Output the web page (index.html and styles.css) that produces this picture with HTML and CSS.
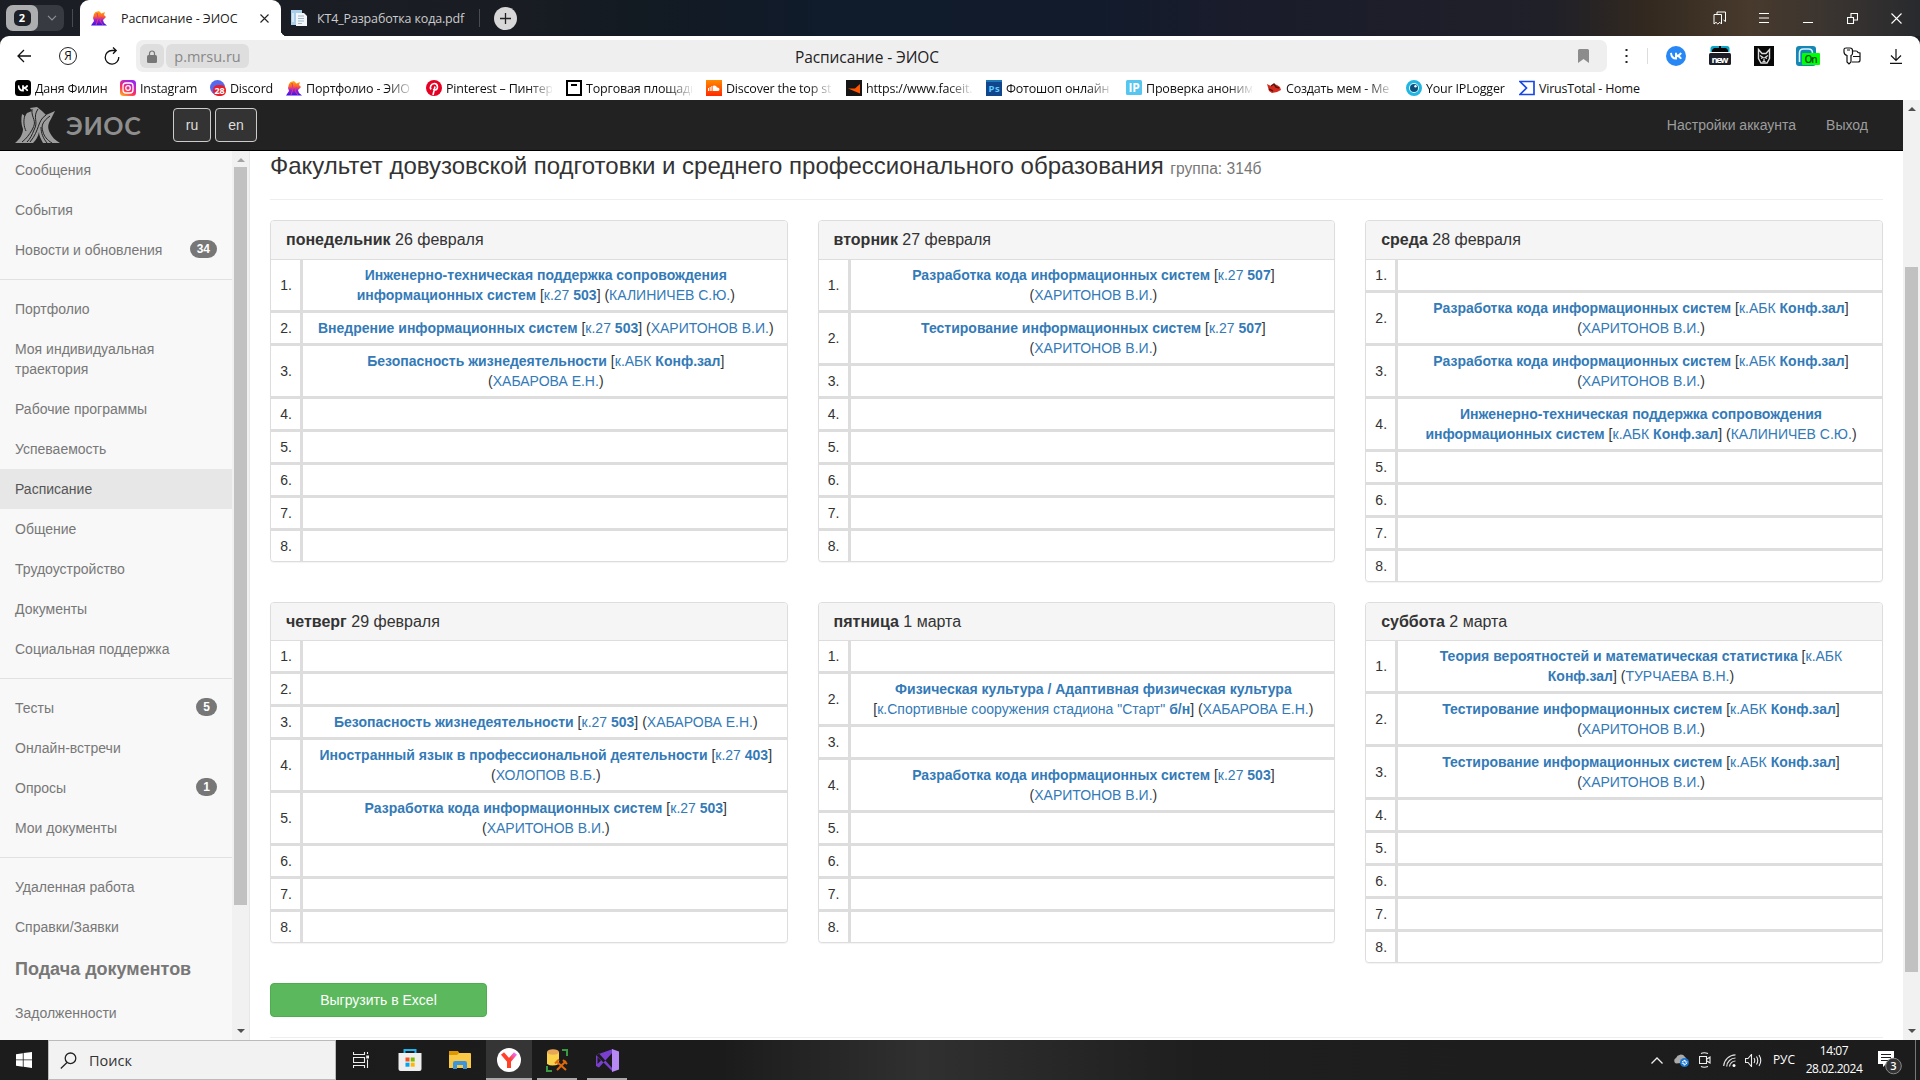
FILE: index.html
```html
<!DOCTYPE html>
<html lang="ru">
<head>
<meta charset="utf-8">
<title>Расписание - ЭИОС</title>
<link rel="stylesheet" href="styles.css">
</head>
<body>
<svg class="defs" width="0" height="0">
  <defs>
    <linearGradient id="flame" x1="0" y1="0" x2="0" y2="1"><stop offset="0" stop-color="#ffb200"/><stop offset=".4" stop-color="#ff5a2f"/><stop offset=".62" stop-color="#a01fd0"/><stop offset="1" stop-color="#3a12e8"/></linearGradient>
    <linearGradient id="insta" x1="0" y1="1" x2=".6" y2="0"><stop offset="0" stop-color="#ffc21a"/><stop offset=".45" stop-color="#ff2f5c"/><stop offset="1" stop-color="#a022f0"/></linearGradient>
    <linearGradient id="cloudy" x1="0" y1="0" x2="0" y2="1"><stop offset="0" stop-color="#ff8a00"/><stop offset="1" stop-color="#ff2a00"/></linearGradient>
    <linearGradient id="ya" x1="0" y1="1" x2="1" y2="0"><stop offset="0" stop-color="#ff4418"/><stop offset=".6" stop-color="#ff4030"/><stop offset="1" stop-color="#f06aff"/></linearGradient>
    <symbol id="eios" viewBox="0 0 16 15"><path fill="url(#flame)" d="M4.500 1L8 0l2.500 2.500L14 1l-1 3 2 2-3 3 1 3 3 2.500H0L3 10 2 7l1-4z"/><path d="M6 2l1 6-2 6M10.500 6L9 10l3 4" stroke="#d63a8c" fill="none"/></symbol>
    <symbol id="vkmark" viewBox="0 0 12 8"><path d="M1 .8c.3 3.600 2 5.700 5 5.700V.8M11 .8C10.300 2.500 9 3.600 6.400 3.700 9 4 10.300 5.200 11.200 6.800" fill="none" stroke="#fff" stroke-width="1.900"/></symbol>
  </defs>
</svg>
<div class="screen">
  <header class="tabstrip">
    <div class="tabgroup"><span class="tabcount"><b>2</b></span>
      <svg class="groupchev" width="10" height="6" viewBox="0 0 10 6"><path d="M1 .8l4 4 4-4" fill="none" stroke="#8d9096" stroke-width="1.200"/></svg></div>
    <i class="vline group-line"></i>
    <div class="tab active"><svg width="16" height="15"><use href="#eios"/></svg><span class="ui tabtext">Расписание - ЭИОС</span>
      <svg class="tabclose" width="9" height="9" viewBox="0 0 9 9"><path d="M.5.5l8 8m0-8l-8 8" stroke="#222" stroke-width="1.100"/></svg></div>
    <div class="tab"><svg width="16" height="16" viewBox="0 0 16 16"><path d="M0 0h11v15H0z" fill="#a9cfe8"/><path d="M5 3h8l3 3v10H5z" fill="#f3f6f8"/><path d="M7 6h6M7 8.500h6M7 11h6M7 13.500h4" stroke="#9eb6c5"/><path d="M2 3v9" stroke="#fff"/></svg><span class="ui tabtext light">КТ4_Разработка кода.pdf</span></div>
    <i class="vline"></i>
    <div class="newtab"><svg width="13" height="13" viewBox="0 0 13 13"><path d="M6.500 1v11M1 6.500h11" stroke="#222" stroke-width="1.300"/></svg></div>
    <div class="slots">
      <span><svg width="14" height="14" viewBox="0 0 14 14"><path d="M1 3.500h7.500V13L6.800 11.300 4.800 13 3 11.300 1 13z M4 3.500V1h8.500v9.500l-2-1.500" fill="none" stroke="#fff" stroke-linejoin="round"/></svg></span>
      <span><svg width="10" height="10" viewBox="0 0 10 10"><path d="M0 .5h10M0 5h10M0 9.500h10" stroke="#fff"/></svg></span>
      <span><svg width="10" height="10" viewBox="0 0 10 10"><path d="M0 9.500h10" stroke="#fff"/></svg></span>
      <span><svg width="11" height="11" viewBox="0 0 11 11"><path d="M.5 4.500h6v6h-6zM4 4V.5h6.500V7H7" fill="none" stroke="#fff" stroke-width="1.100"/></svg></span>
      <span><svg width="11" height="11" viewBox="0 0 11 11"><path d="M.5.5l10 10m0-10l-10 10" stroke="#fff" stroke-width="1.100"/></svg></span>
    </div>
  </header>

  <div class="toolbar">
    <div class="nav">
      <span><svg width="14" height="14" viewBox="0 0 14 14"><path d="M14 7H1M7 1L1 7l6 6" fill="none" stroke="#111" stroke-width="1.300"/></svg></span>
      <span class="yaicon ui">Я</span>
      <span><svg width="16" height="18" viewBox="0 0 16 18"><path d="M14.800 10A6.800 6.800 0 1 1 8 3.500h4M9 .5l3.200 3L9 6.700" fill="none" stroke="#111" stroke-width="1.300"/></svg></span>
    </div>
    <div class="omni">
      <span class="chip lock"><svg width="10" height="13" viewBox="0 0 10 13"><path d="M2.500 6V3.500a2.500 2.500 0 0 1 5 0V6" fill="none" stroke="#777" stroke-width="1.200"/><rect y="5" width="10" height="8" rx="1.500" fill="#777"/></svg></span>
      <span class="chip host ui">p.mrsu.ru</span>
      <span class="pagetitle ui">Расписание - ЭИОС</span>
      <svg class="mark" width="11" height="14" viewBox="0 0 11 14"><path d="M0 1.500Q0 0 1.500 0h8Q11 0 11 1.500V14l-5.500-4L0 14z" fill="#8c8c8c"/></svg>
    </div>
    <svg class="dots" width="3" height="14" viewBox="0 0 3 14"><path d="M.5 0h2v2h-2zM.5 6h2v2h-2zM.5 12h2v2h-2z" fill="#222"/></svg>
    <i class="vline tool-line"></i>
    <div class="slots">
      <span><svg width="20" height="20" viewBox="0 0 20 20"><circle cx="10" cy="10" r="10" fill="#2787f5"/><svg x="4" y="6" width="12" height="8"><use href="#vkmark"/></svg></svg></span>
      <span><svg width="22" height="20" viewBox="0 0 22 20"><path d="M1.500 6V2.500Q1.500 0 4 0h14q2.500 0 2.500 2.500V6z" fill="#0aa5c8"/><path d="M3 6V4l2-2h5V0h2v2h5l2 2v2z" fill="#050505"/><rect y="7" width="22" height="12" rx="1.500" fill="#1c1f26"/><text class="svgbold" x="11" y="16.500" font-size="9.500" textLength="17" text-anchor="middle" fill="#fff">new</text></svg></span>
      <span><svg width="20" height="20" viewBox="0 0 20 20"><path d="M0 0h20v20H0z" fill="#080808"/><path d="M4.500 3.500L8 7.500h4l3.500-4v9L13 17H7l-2.500-4.500z" fill="none" stroke="#ddd" stroke-width="1.400"/><path d="M6 9.500l3 2-2 1M14 9.500l-3 2 2 1M10 12.500V15M8.500 15.500h3" stroke="#ddd" fill="none" stroke-width="1.200"/></svg></span>
      <span><svg width="24" height="20" viewBox="0 0 24 20"><rect width="20" height="20" rx="3" fill="#1687b5"/><path d="M3.500 16V7q0-4 4-4h5q4 0 4 4" fill="none" stroke="#d8f3ff" stroke-width="1.600"/><rect x="6" y="7" width="18" height="12" rx="1" fill="#0f0"/><text class="svgtext" x="15" y="16.500" font-size="10" font-weight="600" textLength="13" text-anchor="middle" fill="#042">On</text></svg></span>
      <span><svg width="18" height="18" viewBox="0 0 18 18"><path d="M1 2.500Q1 1 3 1h4q2.500 0 2.500 2.500v3Q9.500 8 8 8.500V15l-2 2-2-2V8.500Q1 7.500 1 5zM4 3h3M10 4h3q1.500 0 2 1.500l2 .5v7q0 2-2 2H9M10 9.500h7" fill="none" stroke="#111" stroke-width="1.200"/></svg></span>
      <span><svg width="12" height="15" viewBox="0 0 12 15"><path d="M6 0v11M1 6.500l5 5 5-5M0 14.400h12" fill="none" stroke="#111" stroke-width="1.200"/></svg></span>
    </div>
  </div>

  <nav class="bookmarks ui">
    <a class="bm w1"><svg width="16" height="16" viewBox="0 0 16 16"><rect width="16" height="16" rx="3.500"/><svg x="2.500" y="4.500" width="11" height="7.500"><use href="#vkmark"/></svg></svg><span>Даня Филин</span></a>
    <a class="bm w2"><svg width="16" height="16" viewBox="0 0 16 16"><rect width="16" height="16" rx="3.500" fill="url(#insta)"/><rect x="3" y="3" width="10" height="10" rx="3" fill="none" stroke="#fff" stroke-width="1.300"/><circle cx="8" cy="8" r="2.300" fill="none" stroke="#fff" stroke-width="1.300"/></svg><span>Instagram</span></a>
    <a class="bm w3"><svg width="16" height="16" viewBox="0 0 16 16"><circle cx="7.500" cy="7.500" r="7.500" fill="#5468f0"/><rect x="3" y="5" width="13" height="11" rx="5" fill="#e5202c"/><text class="svgbold" x="9.500" y="14" font-size="9" text-anchor="middle" textLength="10" fill="#fff">28</text></svg><span>Discord</span></a>
    <a class="bm"><svg width="16" height="15"><use href="#eios"/></svg><span>Портфолио - ЭИО</span></a>
    <a class="bm"><svg width="16" height="16" viewBox="0 0 16 16"><circle cx="8" cy="8" r="8" fill="#e60023"/><path d="M7 15l2-8.500M5 9.500C3.500 7 5 3.500 8.300 3.500c4 0 4.200 6.500.7 6.500-1 0-1.500-.6-1.500-1" fill="none" stroke="#fff" stroke-width="1.600"/></svg><span>Pinterest – Пинтер</span></a>
    <a class="bm"><svg width="16" height="16" viewBox="0 0 16 16"><path d="M1 1h14v14H1z" fill="#fff" stroke="#000" stroke-width="2"/><path d="M5 5h6" stroke="#000" stroke-width="2"/></svg><span>Торговая площадк</span></a>
    <a class="bm"><svg width="16" height="16" viewBox="0 0 16 16"><path d="M0 0h16v16H0z" fill="url(#cloudy)"/><path d="M2.500 8v3M4.200 7v4M5.900 6v5" stroke="#fff"/><path d="M7 11V5.800q3-1.300 4 1.700 2.500-.2 2.500 1.700T12 11z" fill="#fff"/></svg><span>Discover the top st</span></a>
    <a class="bm"><svg width="16" height="16" viewBox="0 0 16 16"><path d="M0 0h16v16H0z" fill="#161616"/><path d="M2 8.500h7L14 4v9.500z" fill="#ff5500"/></svg><span>https://www.faceit.</span></a>
    <a class="bm"><svg width="16" height="16" viewBox="0 0 16 16"><path d="M0 0h16v16H0z" fill="#12468c"/><path d="M0 0h16v2H0z" fill="#1e78b8"/><text class="svgbold" x="8" y="12" font-size="9.500" text-anchor="middle" textLength="11" fill="#5cc8ff">Ps</text></svg><span>Фотошоп онлайн</span></a>
    <a class="bm"><svg width="16" height="16" viewBox="0 0 16 16"><rect width="16" height="15" rx="1.500" fill="#56c5f0"/><text class="svgbold" x="8" y="12" font-size="12" text-anchor="middle" textLength="11" fill="#fff">IP</text></svg><span>Проверка аноним</span></a>
    <a class="bm"><svg width="16" height="16" viewBox="0 0 16 16"><path d="M1 4l4 2 3-2 3 1 3 2 1 3-4 2-5 1-3-2z" fill="#d42b1e"/><path d="M5 6l3-2 2 3 3 1M3 9l4 2" stroke="#57180f" fill="none" stroke-width="1.500"/></svg><span>Создать мем - Ме</span></a>
    <a class="bm w12"><svg width="16" height="16" viewBox="0 0 16 16"><circle cx="8" cy="8" r="6.500" fill="#d8f7ff" stroke="#21b5e2" stroke-width="3"/><circle cx="8" cy="8" r="4" fill="#0b4f7d"/><circle cx="9.500" cy="6.300" r="1.200" fill="#fff"/></svg><span>Your IPLogger</span></a>
    <a class="bm"><svg width="16" height="16" viewBox="0 0 16 16"><path d="M1 1.500h14v13H1L7.500 8z" fill="#fff" stroke="#1848e8" stroke-width="1.700"/></svg><span>VirusTotal - Home</span></a>
  </nav>

  <div class="viewport">
    <div class="page">
      <header class="site">
        <svg class="logo" width="45" height="36" viewBox="0 0 45 36"><path d="M15 1l7-1 5 4 4 4 9-4-4 8c-4 6-3 10-1 14 2 4 5 7 10 10H0c5-4 8-9 8-14-2-5-2-10-1-15l3 2 2-3 5-2z" fill="#9d9d9d"/><path d="M17 2c-1 10 6 11 0 21-3 5-6 9-10 12M23 2c-6 9 1 12-4 21-2 5-4 9-7 12M31 8c-9 6-6 15-16 27M35 9c-8 6-9 10-7 16 1 4 4 8 9 11M10 8c-2 6-1 12 1 16M26 20c0 6 2 11 6 16" fill="none" stroke="#222" stroke-width="1"/><path d="M24 25c-1 5-3 8-6 11h10c-2-4-4-7-4-11z" fill="#222"/></svg>
        <b class="brand">ЭИОС</b>
        <span class="lang ru">ru</span><span class="lang en">en</span>
        <span class="account">Настройки аккаунта</span><span class="exit">Выход</span>
      </header>
      <div class="body">
        <aside class="sidebar">
          <ul class="menu">
            <li>Сообщения</li><li>События</li><li>Новости и обновления<b class="badge">34</b></li>
            <li class="sep"></li>
            <li>Портфолио</li><li>Моя индивидуальная<br>траектория</li><li>Рабочие программы</li><li>Успеваемость</li><li class="on">Расписание</li><li>Общение</li><li>Трудоустройство</li><li>Документы</li><li>Социальная поддержка</li>
            <li class="sep"></li>
            <li>Тесты<b class="badge">5</b></li><li>Онлайн-встречи</li><li>Опросы<b class="badge">1</b></li><li>Мои документы</li>
            <li class="sep"></li>
            <li>Удаленная работа</li><li>Справки/Заявки</li><li class="title">Подача документов</li><li>Задолженности</li>
          </ul>
          <div class="scroll side"><i class="up pale"></i><i class="thumb"></i><i class="down"></i></div>
        </aside>
        <main class="content">
          <h3>Факультет довузовской подготовки и среднего профессионального образования <small>группа: 314б</small></h3>
          <section class="days">
            <article class="day"><h4><b>понедельник</b> 26 февраля</h4><div class="rows">
              <i>1.</i><p><a><b>Инженерно-техническая поддержка сопровождения<br>информационных систем</b></a> [<a>к.27 <b>503</b></a>] (<a>КАЛИНИЧЕВ С.Ю.</a>)</p>
              <i>2.</i><p><a><b>Внедрение информационных систем</b></a> [<a>к.27 <b>503</b></a>] (<a>ХАРИТОНОВ В.И.</a>)</p>
              <i>3.</i><p><a><b>Безопасность жизнедеятельности</b></a> [<a>к.АБК <b>Конф.зал</b></a>]<br>(<a>ХАБАРОВА Е.Н.</a>)</p>
              <i>4.</i><p></p><i>5.</i><p></p><i>6.</i><p></p><i>7.</i><p></p><i>8.</i><p></p></div></article>
            <article class="day"><h4><b>вторник</b> 27 февраля</h4><div class="rows">
              <i>1.</i><p><a><b>Разработка кода информационных систем</b></a> [<a>к.27 <b>507</b></a>]<br>(<a>ХАРИТОНОВ В.И.</a>)</p>
              <i>2.</i><p><a><b>Тестирование информационных систем</b></a> [<a>к.27 <b>507</b></a>]<br>(<a>ХАРИТОНОВ В.И.</a>)</p>
              <i>3.</i><p></p><i>4.</i><p></p><i>5.</i><p></p><i>6.</i><p></p><i>7.</i><p></p><i>8.</i><p></p></div></article>
            <article class="day"><h4><b>среда</b> 28 февраля</h4><div class="rows">
              <i>1.</i><p></p>
              <i>2.</i><p><a><b>Разработка кода информационных систем</b></a> [<a>к.АБК <b>Конф.зал</b></a>]<br>(<a>ХАРИТОНОВ В.И.</a>)</p>
              <i>3.</i><p><a><b>Разработка кода информационных систем</b></a> [<a>к.АБК <b>Конф.зал</b></a>]<br>(<a>ХАРИТОНОВ В.И.</a>)</p>
              <i>4.</i><p><a><b>Инженерно-техническая поддержка сопровождения<br>информационных систем</b></a> [<a>к.АБК <b>Конф.зал</b></a>] (<a>КАЛИНИЧЕВ С.Ю.</a>)</p>
              <i>5.</i><p></p><i>6.</i><p></p><i>7.</i><p></p><i>8.</i><p></p></div></article>
            <article class="day"><h4><b>четверг</b> 29 февраля</h4><div class="rows">
              <i>1.</i><p></p><i>2.</i><p></p>
              <i>3.</i><p><a><b>Безопасность жизнедеятельности</b></a> [<a>к.27 <b>503</b></a>] (<a>ХАБАРОВА Е.Н.</a>)</p>
              <i>4.</i><p><a><b>Иностранный язык в профессиональной деятельности</b></a> [<a>к.27 <b>403</b></a>]<br>(<a>ХОЛОПОВ В.Б.</a>)</p>
              <i>5.</i><p><a><b>Разработка кода информационных систем</b></a> [<a>к.27 <b>503</b></a>]<br>(<a>ХАРИТОНОВ В.И.</a>)</p>
              <i>6.</i><p></p><i>7.</i><p></p><i>8.</i><p></p></div></article>
            <article class="day"><h4><b>пятница</b> 1 марта</h4><div class="rows">
              <i>1.</i><p></p>
              <i>2.</i><p><a><b>Физическая культура / Адаптивная физическая культура</b></a><br>[<a>к.Спортивные сооружения стадиона "Старт" <b>б/н</b></a>] (<a>ХАБАРОВА Е.Н.</a>)</p>
              <i>3.</i><p></p>
              <i>4.</i><p><a><b>Разработка кода информационных систем</b></a> [<a>к.27 <b>503</b></a>]<br>(<a>ХАРИТОНОВ В.И.</a>)</p>
              <i>5.</i><p></p><i>6.</i><p></p><i>7.</i><p></p><i>8.</i><p></p></div></article>
            <article class="day"><h4><b>суббота</b> 2 марта</h4><div class="rows">
              <i>1.</i><p><a><b>Теория вероятностей и математическая статистика</b></a> [<a>к.АБК<br><b>Конф.зал</b></a>] (<a>ТУРЧАЕВА В.Н.</a>)</p>
              <i>2.</i><p><a><b>Тестирование информационных систем</b></a> [<a>к.АБК <b>Конф.зал</b></a>]<br>(<a>ХАРИТОНОВ В.И.</a>)</p>
              <i>3.</i><p><a><b>Тестирование информационных систем</b></a> [<a>к.АБК <b>Конф.зал</b></a>]<br>(<a>ХАРИТОНОВ В.И.</a>)</p>
              <i>4.</i><p></p><i>5.</i><p></p><i>6.</i><p></p><i>7.</i><p></p><i>8.</i><p></p></div></article>
          </section>
          <a class="excel">Выгрузить в Excel</a>
          <hr>
        </main>
      </div>
    </div>
    <div class="scroll main"><i class="up"></i><i class="thumb"></i><i class="down"></i></div>
  </div>

  <footer class="taskbar">
    <div class="start"><svg width="16" height="16" viewBox="0 0 16 16"><path d="M0 2.200l6.800-1v6.300H0zM7.600 1.100L16 0v7.500H7.600zM0 8.300h6.800v6.400L0 13.800zM7.600 8.300H16V16l-8.400-1.200z" fill="#fff"/></svg></div>
    <div class="search ui"><svg width="17" height="17" viewBox="0 0 17 17"><circle cx="10.500" cy="6.300" r="5.300" fill="none" stroke="#222" stroke-width="1.300"/><path d="M7 10.500L.8 16.500" stroke="#222" stroke-width="1.300"/></svg><span>Поиск</span></div>
    <div class="apps">
      <span class="app"><svg width="16" height="16" viewBox="0 0 16 16"><path d="M.5 0v2.500h11V0M.5 5.500h11v5H.5zM.5 16v-2.500h11V16M14.500 0v2M14.500 7.500V16" fill="none" stroke="#eee" stroke-width="1.100"/><path d="M13.200 3.500H16v3h-2.800z" fill="#eee"/></svg></span>
      <span class="app"><svg width="24" height="24" viewBox="0 0 24 24"><path d="M6.500 7V2h11v5" fill="none" stroke="#23b4f2" stroke-width="2"/><path d="M.5 5h23v16q0 2-2 2h-19q-2 0-2-2z" fill="#eee"/><path d="M7.500 9.500h4v4h-4z" fill="#f25022"/><path d="M12.700 9.500h4v4h-4z" fill="#7fba00"/><path d="M7.500 14.700h4v4h-4z" fill="#00a4ef"/><path d="M12.700 14.700h4v4h-4z" fill="#ffb900"/></svg></span>
      <span class="app"><svg width="22" height="18" viewBox="0 0 22 18"><path d="M0 1q0-1 1-1h7l2 2h11q1 0 1 1v14H0z" fill="#f9c846"/><path d="M0 0h9l1 2-2 2H0z" fill="#dd9700"/><path d="M4 18v-6q0-2 2-2h10q2 0 2 2v6h-4v-4H8v4z" fill="#3b95dc"/></svg></span>
      <span class="app current"><svg width="24" height="24" viewBox="0 0 24 24"><circle cx="12" cy="12" r="12" fill="#fff"/><path d="M5.500 5.500L12 13v7M12 13l6.500-7.500" fill="none" stroke="url(#ya)" stroke-width="4"/></svg></span>
      <span class="app open"><svg width="22" height="23" viewBox="0 0 22 23"><path d="M1 3v12q5 3 12 0V3z" fill="#fbd34a"/><ellipse cx="7" cy="3" rx="6" ry="2.800" fill="#e8a659"/><path d="M16 1h5v6M1 17v5h5" fill="none" stroke="#3a9a44" stroke-width="2"/><path d="M10 12l10 9M20 12l-9 9M9 14.500l4-4M17 11l4 4" stroke="#e0690c" stroke-width="2"/></svg></span>
      <span class="app open"><svg width="24" height="23" viewBox="0 0 24 23"><path d="M1 6l3-1.500L18 20v3zM1 6v11l3 1.500L18 3V0z" fill="#7b3fd0"/><path d="M2.500 8v7L6 11.500z" fill="#1c1c1c"/><path d="M17 0l7 2.500v18L17 23z" fill="#b689f3"/><path d="M17 7v9l-5-4.500z" fill="#1c1c1c"/></svg></span>
    </div>
    <div class="tray ui">
      <span class="t1"><svg width="12" height="7" viewBox="0 0 12 7"><path d="M.5 6.500L6 1l5.500 5.500" fill="none" stroke="#eee" stroke-width="1.300"/></svg></span>
      <span class="t1"><svg width="16" height="13" viewBox="0 0 16 13"><path d="M3 9.500a3 3 0 0 1 0-5.500A5 5 0 0 1 12 3q2 1 1.500 5.500z" fill="#aaa"/><circle cx="11.500" cy="8.500" r="4.500" fill="#1976d2"/><path d="M9 8l3-2v2h2.500M14 9.200l-3 2v-2H8.700" stroke="#fff" fill="none"/></svg></span>
      <span class="t1"><svg width="12" height="16" viewBox="0 0 12 16"><path d="M.5 4.500h7v7h-7zM8 7l3-2v6L8 9M2 1.500Q5 0 9 1.500M2 14.500Q5 16 9 14.500" fill="none" stroke="#eee" stroke-width="1.100"/></svg></span>
      <span class="t1"><svg width="13" height="13" viewBox="0 0 13 13"><path d="M.7 12A12 12 0 0 1 12.500.8M3.700 12.500A9 9 0 0 1 12.500 4M6.500 12.500a6 6 0 0 1 6-5.500" fill="none" stroke="#ddd" stroke-width="1.200"/><circle cx="11" cy="11.500" r="1.500" fill="#fff"/></svg></span>
      <span class="t1"><svg width="17" height="13" viewBox="0 0 17 13"><path d="M.5 4.500H3l3.500-4v12l-3.500-4H.5zM9 4q1.500 2.500 0 5M11.500 2.500q2.500 4 0 8M14 1q3.500 5.500 0 11" fill="none" stroke="#eee" stroke-width="1.100"/></svg></span>
      <span class="langcode">РУС</span>
      <span class="clock">14:07<br>28.02.2024</span>
      <span class="note"><svg width="26" height="26" viewBox="0 0 26 26"><path d="M1 2h16v13H9l-3 3v-3H1z" fill="#fff"/><path d="M4 5.500h10M4 8.500h10M4 11.500h7" stroke="#1c1c1c"/><circle cx="16.500" cy="17" r="7.800" fill="#333" stroke="#888"/><text class="svgtext" x="16.500" y="21" font-size="11" font-weight="600" text-anchor="middle" fill="#fff">3</text></svg></span>
      <i class="peek"></i>
    </div>
  </footer>
</div>
</body>
</html>
```

FILE: styles.css
```css
* { box-sizing: border-box; }
body { margin: 0; overflow: hidden; font: 14px/20px "Liberation Sans", Arial, sans-serif; color: #333; background: #15181d; }
.defs { position: absolute; }
svg { display: block; flex: none; }
.screen { width: 1920px; height: 1080px; display: flex; flex-direction: column; background: #1b1e25; }
.ui, .svgtext, .svgbold { font-family: "Open Sans", "Noto Sans", sans-serif; }
.svgbold { font-weight: 700; }
.vline { width: 1px; height: 18px; background: #484c52; flex: none; }

/* tab strip */
.tabstrip { height: 36px; flex: none; display: flex; align-items: center; padding-left: 6px;
  background: linear-gradient(90deg, #1b1e25 0, #191c23 520px, #121a22 640px, #101b2b 820px, #111b2c 1080px, #1b1c2b 1260px, #1f2028 1550px, #33291f 1650px, #483a2d 1750px, #3a3430 1830px, #282a2e 1920px); }
.tabgroup { width: 58px; height: 26px; border-radius: 7px; background: #373a40; display: flex; align-items: center; }
.tabcount { width: 32px; height: 26px; border-radius: 7px; background: #adaeaf; display: flex; align-items: center; justify-content: center; }
.tabcount b { width: 17px; height: 16px; border-radius: 5px; background: #1d2026; color: #fff; font: 700 11px/16px "Open Sans", sans-serif; text-align: center; }
.groupchev { margin-left: 9px; }
.group-line { margin: 0 7px 0 8px; }
.tab { height: 36px; display: flex; align-items: center; padding-left: 10px; width: 198px; position: relative; }
.tab.active { width: 201px; padding-left: 11px; background: #fff; border-radius: 9px 9px 0 0; }
.tab.active::after { content: ""; position: absolute; left: 100%; bottom: 0; width: 6px; height: 6px; background: radial-gradient(circle at 100% 0, transparent 6px, #fff 6.500px); }
.tabtext { font-size: 12.500px; margin-left: 14px; width: 118px; color: #222; white-space: nowrap; letter-spacing: -.05px; padding-top: 1px; }
.tabtext.light { color: #ccc; margin-left: 10px; width: 150px; letter-spacing: -.15px; }
.tabclose { margin-left: 21px; }
.newtab { width: 23px; height: 23px; border-radius: 50%; background: #d8d8d8; margin-left: 14px; display: flex; align-items: center; justify-content: center; }
.slots { display: flex; margin-left: auto; padding-right: 2px; }
.slots span { width: 44px; display: flex; justify-content: center; align-items: center; }

/* address bar */
.toolbar { height: 40px; flex: none; display: flex; align-items: center; background: #fff; border-radius: 9px 9px 0 0; }
.nav { width: 136px; display: flex; padding-left: 2px; }
.nav span { width: 44px; display: flex; justify-content: center; align-items: center; }
.nav .yaicon { width: 18px; height: 18px; margin: 0 13px; border: 1.300px solid #222; border-radius: 50%; font-size: 12px; line-height: 16px; color: #111; }
.omni { width: 1471px; height: 32px; border-radius: 7px; background: #efefef; display: flex; align-items: center; padding-left: 4px; }
.chip { height: 24px; border-radius: 6px; background: #dedede; display: flex; align-items: center; justify-content: center; }
.lock { width: 24px; }
.host { width: 83px; margin-left: 2px; font-size: 14.500px; color: #888; padding-top: 1px; }
.pagetitle { margin-left: 546px; width: 146px; font-size: 15.500px; color: #222; white-space: nowrap; letter-spacing: -.1px; padding-top: 1px; }
.mark { margin-left: 637px; }
.dots { margin-left: 18px; }
.tool-line { height: 16px; background: #ddd; margin-left: 19px; }

/* bookmarks */
.bookmarks { height: 24px; flex: none; display: flex; padding-left: 15px; background: #fff; font-size: 12.500px; letter-spacing: -.2px; color: #111; }
.bm { width: 140px; height: 24px; display: flex; align-items: center; flex: none; }
.bm span { max-width: 106px; margin-left: 4px; overflow: hidden; white-space: nowrap; line-height: 20px; padding-top: 1px; -webkit-mask: linear-gradient(90deg, #000 82px, transparent 108px); mask: linear-gradient(90deg, #000 82px, transparent 108px); }
.w1 { width: 105px; } .w2 { width: 90px; } .w3 { width: 76px; } .w12 { width: 113px; }
.bm:last-child span { mask: none; -webkit-mask: none; }

/* web page */
.viewport { height: 940px; flex: none; display: flex; overflow: hidden; background: #fff; }
.page { width: 1903px; }
.site { height: 51px; background: #222; border-bottom: 1px solid #000; display: flex; align-items: center; padding-left: 15px; color: #9d9d9d; }
.logo { margin-top: -1px; }
.brand { font: 700 25px/30px Lato, sans-serif; width: 77px; margin-left: 6px; margin-right: 30px; color: #8e8e8e; letter-spacing: .7px; }
.lang { height: 34px; border: 1px solid #ccc; border-radius: 4px; background: #333; color: #ddd; line-height: 32px; text-align: center; }
.ru { width: 38px; } .en { width: 42px; margin-left: 4px; }
.account { margin-left: auto; } .exit { margin: 0 35px 0 30px; }
.body { height: 889px; display: flex; overflow: hidden; }
.sidebar { width: 250px; height: 889px; display: flex; flex: none; background: #f8f8f8; border-right: 1px solid #e7e7e7; overflow: hidden; }
.menu { list-style: none; margin: -1px 0 0; padding: 0; width: 232px; color: #777; }
.menu li { padding: 10px 15px; position: relative; }
.menu .on { background: #e7e7e7; color: #555; }
.menu .sep { height: 1px; padding: 0; margin: 9px 0; background: #e1e1e1; }
.menu .title { font-size: 18px; line-height: 25.700px; font-weight: 700; }
.badge { float: right; min-width: 21px; height: 18px; border-radius: 9px; background: #777; color: #fff; font-size: 12px; line-height: 18px; padding: 0 7px; text-align: center; }
.scroll { width: 17px; height: 100%; background: #f1f1f1; display: flex; flex-direction: column; align-items: center; flex: none; }
.scroll .thumb { width: 13px; background: #c1c1c1; }
.up, .down { border: 4px solid transparent; border-top-width: 0; border-bottom-color: #505050; height: 4px; margin-top: 7px; }
.up.pale { border-bottom-color: #a3a3a3; }
.down { border-bottom: 0; border-top: 4px solid #505050; margin: auto 0 7px; }
.side .thumb { height: 738px; margin-top: 5px; }
.main .thumb { height: 705px; margin-top: 156px; }
.content { width: 1653px; padding: 0 20px; }
h3 { margin: 0 0 20px; height: 49px; padding-top: 2px; border-bottom: 1px solid #eee; font-weight: 400; font-size: 24px; line-height: 26px; }
h3 small { font-size: 15.600px; color: #777; }
.days { display: grid; grid-template-columns: repeat(3, 517.600px); column-gap: 30px; row-gap: 20px; align-items: start; }
.day { border: 1px solid #ddd; border-radius: 4px; box-shadow: 0 1px 1px rgba(0,0,0,.05); overflow: hidden; background: #fff; }
.day h4 { margin: 0; padding: 10px 15px; font-weight: 400; font-size: 16px; line-height: 17.600px; background: #f5f5f5; border-bottom: 1px solid #ddd; }
.rows { display: grid; grid-template-columns: 29px 1fr; gap: 3px; background: #ddd; }
.rows i { font-style: normal; background: #fff; display: flex; align-items: center; justify-content: center; padding-left: 1px; }
.rows p { margin: 0; min-height: 30px; padding: 5px 4px 5px 6px; text-align: center; background: #fff; white-space: nowrap; }
.rows a { color: #337ab7; }
.excel { display: block; width: 217px; height: 34px; margin: 20px 0; border: 1px solid #4cae4c; border-radius: 4px; background: #5cb85c; color: #fff; text-align: center; line-height: 32px; }
hr { margin: 0; border: 0; border-top: 1px solid #eee; }

/* taskbar */
.taskbar { height: 40px; display: flex; background: linear-gradient(90deg, #1c1c1c 0, #1b1b1b 720px, #303030 920px, #1e1e1e 1200px, #1c1c1c 1920px); color: #fff; }
.start { width: 48px; display: flex; align-items: center; justify-content: center; }
.search { width: 288px; background: #f2f2f2; border: 1px solid #bbb; display: flex; align-items: center; padding-left: 11px; font-size: 14.500px; color: #333; }
.search span { margin-left: 12px; padding-top: 1px; }
.apps { display: flex; }
.app { width: 49.500px; display: flex; align-items: center; justify-content: center; }
.current { width: 46px; margin-left: 1px; margin-right: 1px; background: #353535; box-shadow: inset 0 -2px #a9a9a9; }
.open { background: linear-gradient(#a9a9a9, #a9a9a9) center bottom / 40px 2px no-repeat; }
.tray { margin-left: auto; display: flex; align-items: center; font-size: 12px; }
.t1 { width: 24.300px; display: flex; justify-content: center; }
.langcode { width: 36px; text-align: center; }
.clock { width: 64px; text-align: center; line-height: 18px; letter-spacing: -.45px; }
.note { width: 26px; margin: 4px 12px 0 11px; }
.peek { width: 1px; height: 40px; background: #777; margin-right: 4px; }
```
